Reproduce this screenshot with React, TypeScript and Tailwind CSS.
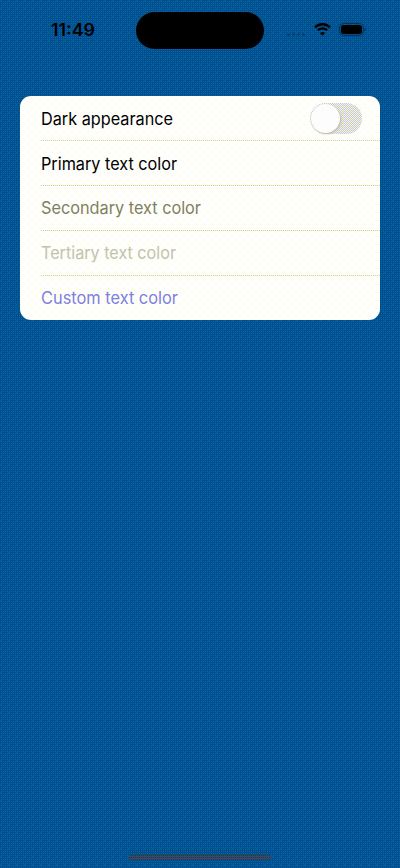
const rows = [
  { label: "Dark appearance", color: "text-black", width: 132, baseline: 19 },
  { label: "Primary text color", color: "text-black", width: 136, baseline: 19 },
  { label: "Secondary text color", color: "text-[#7f7f60]", width: 160, baseline: 18.4 },
  { label: "Tertiary text color", color: "text-[#c3c3ac]", width: 135, baseline: 18.4 },
  { label: "Custom text color", color: "text-[#7f7fe0]", width: 137, baseline: 18.4 },
];

function StatusBar() {
  return (
    <header className="flex h-[60px] items-start">
      <div className="w-[136px] pt-[19px] pl-[51px] text-[17px] leading-[22px] font-semibold">
        <svg className="block h-[22px] w-[46px] overflow-visible">
          <text x="0" y="17" textLength="44" lengthAdjust="spacingAndGlyphs">11:49</text>
        </svg>
      </div>
      <div className="mt-[11.5px] h-[37.5px] w-[128px] rounded-full bg-black" />
      <div className="mt-[33px] ml-[23px] flex gap-[2px]">
        {[0, 1, 2, 3].map((i) => (
          <i key={i} className="h-[3px] w-[3px] rounded-full bg-[#003366]/60" />
        ))}
      </div>
      <svg className="mt-[23px] ml-[9px] h-[13px] w-[17px]" viewBox="0 0 17 13" fill="none" stroke="black">
        <path d="M1 4.4C5.2.2 11.8.2 16 4.4" strokeWidth="2.3" />
        <path d="M3.8 7.3C6.5 4.7 10.5 4.7 13.2 7.3" strokeWidth="2.1" />
        <path d="M8.5 12.7 5.9 10C7.4 8.7 9.6 8.7 11.1 10Z" fill="black" stroke="none" />
      </svg>
      <svg className="mt-[22px] ml-[8px] h-[15px] w-[28px]" viewBox="0 0 28 15">
        <rect x=".5" y="1.5" width="24" height="12" rx="4" fill="none" stroke="#003366" />
        <rect x="2" y="3" width="21" height="9" rx="2.5" />
        <path d="M25.5 5.5c1.8.8 1.8 3.2 0 4z" fill="#003366" />
      </svg>
    </header>
  );
}

function Toggle() {
  return (
    <button
      aria-label="Dark appearance"
      className="mr-[18px] flex h-[31px] w-[52px] items-center rounded-full bg-[#f0f0f8] bg-[conic-gradient(from_90deg_at_3px_3px,#ffff66_90deg,transparent_0),conic-gradient(from_90deg_at_1px_1px,#cccccc_90deg,transparent_0),conic-gradient(from_90deg_at_1px_1px,#cccccc_90deg,transparent_0)] [background-position:1px_0,0_0,1px_1px] [background-size:4px_4px,2px_2px,2px_2px] p-[1px]"
    >
      <span className="h-[29px] w-[29px] rounded-full bg-[#fdfdff] bg-[conic-gradient(from_90deg_at_7px_7px,#ffff88_90deg,transparent_0)] [background-position:4px_5px] [background-size:8px_8px] shadow-[1px_1px_2px_#bbbba0]" />
    </button>
  );
}

export default function App() {
  return (
    <main className="flex h-[868px] w-[400px] flex-col overflow-hidden bg-[#004c99] bg-[conic-gradient(from_90deg_at_7px_7px,#007755_90deg,transparent_0),conic-gradient(from_90deg_at_1px_1px,#0a5362_90deg,transparent_0),conic-gradient(from_90deg_at_1px_1px,#0066bb_90deg,transparent_0)] [background-position:1px_1px,1px_1px,0_0] [background-size:8px_8px,2px_2px,2px_2px] font-[Inter,sans-serif] text-black">
      <StatusBar />
      <section className="mt-[36px] ml-[20px] h-[224px] w-[360px] overflow-hidden rounded-[11px] bg-[#fefefc] bg-[conic-gradient(from_90deg_at_7px_7px,#ffffaa_90deg,transparent_0),conic-gradient(from_90deg_at_7px_7px,#ffffaa_90deg,transparent_0)] [background-position:1px_1px,5px_5px] [background-size:8px_8px]">
        {rows.map((row, i) => (
          <div key={row.label} className="ml-[21px]">
            <div className="flex h-[44px] items-center justify-between">
              <svg className={"h-[24px] w-[180px] overflow-visible text-[17px] " + row.color}>
                <text x="0" y={row.baseline} fill="currentColor" textLength={row.width} lengthAdjust="spacingAndGlyphs">{row.label}</text>
              </svg>
              {i === 0 && <Toggle />}
            </div>
            {i < 4 && <div className="h-px bg-[repeating-linear-gradient(90deg,#ccccdd_0_1px,#ffff99_1px_2px)]" />}
          </div>
        ))}
      </section>
      <footer className="mt-auto mb-[8px] ml-[129px] h-[5px] w-[142px] rounded-full bg-[#334b66] bg-[conic-gradient(from_90deg_at_1px_1px,#333344_90deg,transparent_0)] [background-position:1px_1px] [background-size:2px_2px]" />
    </main>
  );
}
